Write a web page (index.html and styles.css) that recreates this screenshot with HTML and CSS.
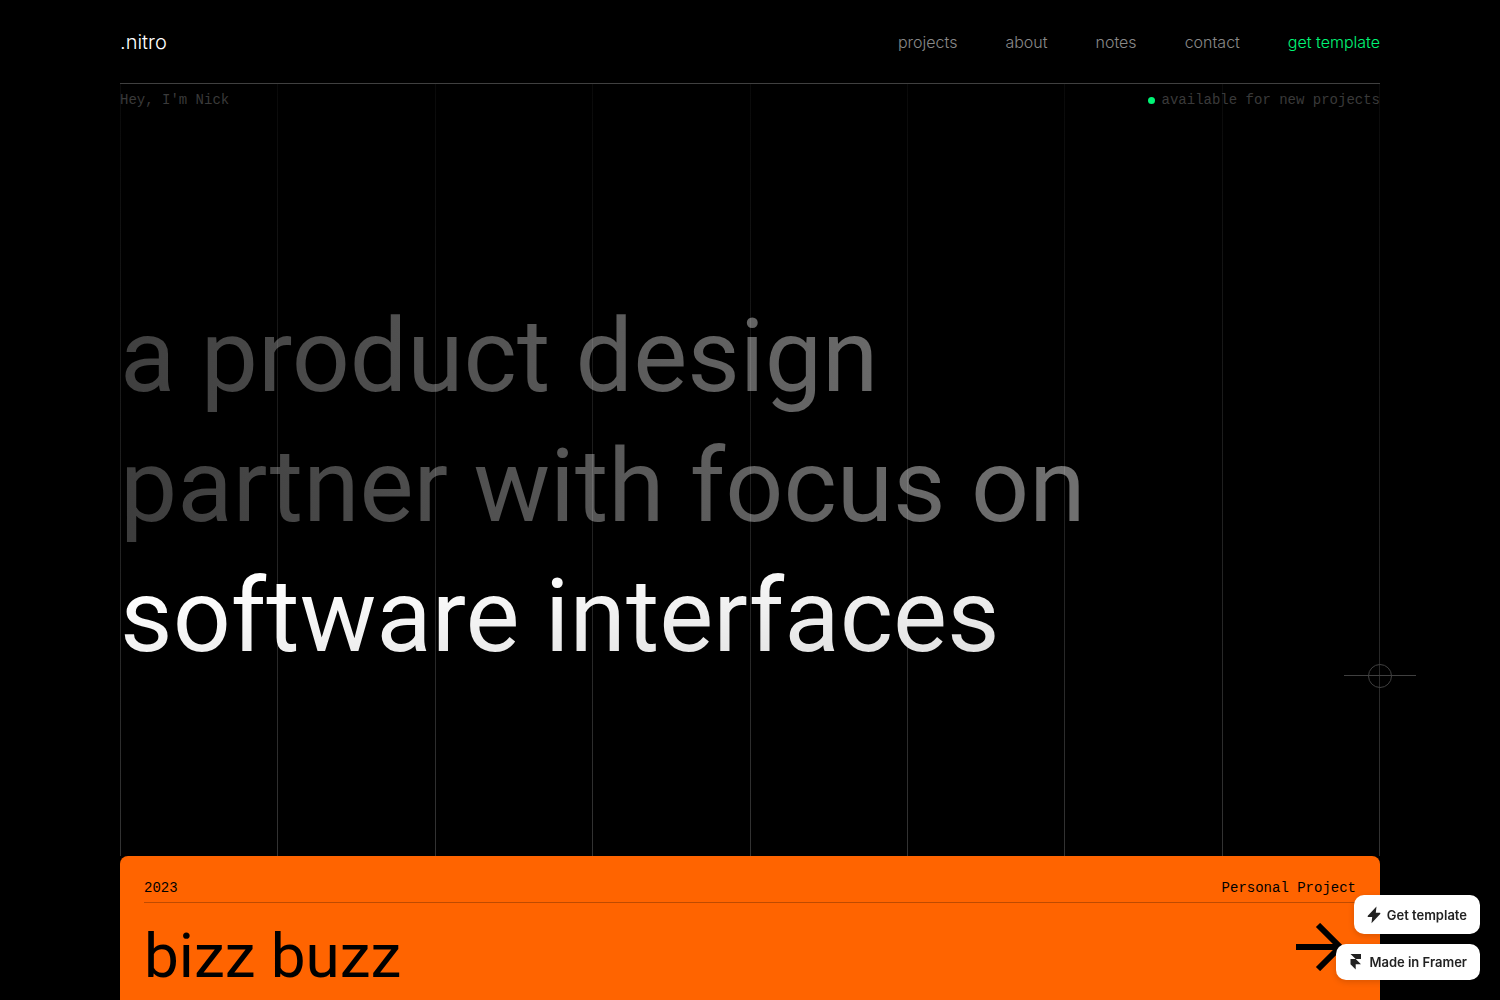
FILE: index.html
```html
<!DOCTYPE html>
<html lang="en">
<head>
<meta charset="utf-8">
<meta name="viewport" content="width=device-width, initial-scale=1">
<title>.nitro</title>
<link rel="stylesheet" href="styles.css">
</head>
<body>
<div class="page">
  <header class="header">
    <a class="logo" href="#">.nitro</a>
    <nav class="nav">
      <a href="#projects">projects</a>
      <a href="#about">about</a>
      <a href="#notes">notes</a>
      <a href="#contact">contact</a>
      <a class="accent" href="#template">get template</a>
    </nav>
  </header>
  <main class="main">
    <section class="hero">
      <div class="intro">
        <span>Hey, I'm Nick</span>
        <span class="status"><i class="dot"></i>available for new projects</span>
      </div>
      <h1 class="title">
        <span class="muted">a product design<br>partner with focus on</span>
        <span class="bright">software interfaces</span>
      </h1>
      <div class="grid-lines" aria-hidden="true"><i></i><i></i><i></i><i></i><i></i><i></i><i></i><i></i><i></i></div>
      <div class="marker" aria-hidden="true"></div>
    </section>
    <article class="card" id="projects">
      <div class="card-meta"><span>2023</span><span>Personal Project</span></div>
      <div class="card-head">
        <h2>bizz buzz</h2>
        <svg class="arrow" viewBox="0 0 60 48" width="60" height="48" aria-hidden="true"><path d="M0 24H44M22 2L44 24L22 46" fill="none" stroke="#000" stroke-width="6"/></svg>
      </div>
    </article>
  </main>
</div>
<div class="badges">
  <a class="badge badge-tall" href="#template">
    <svg viewBox="0 0 14 18" width="14" height="18" aria-hidden="true"><path d="M9.500.500L.8 9.800Q.2 11 1.200 11H5.200L4.500 17.200L13.200 8Q13.800 6.800 12.800 6.800H8.800Z" fill="#222"/></svg>
    Get template
  </a>
  <a class="badge" href="#framer">
    <svg viewBox="0 0 14 18" width="14" height="18" aria-hidden="true"><path d="M1.500 1H12V6H6.700ZM1.500 6H6.700L12 11.300H6.700V16.500L1.500 11.300Z" fill="#222"/></svg>
    Made in Framer
  </a>
</div>
</body>
</html>
```
FILE: styles.css
```css
* { box-sizing: border-box; }
body {
  margin: 0;
  background: #000;
  color: #fff;
  font-family: Inter, "Liberation Sans", sans-serif;
}
a { color: inherit; text-decoration: none; }
h1, h2 {
  margin: 0;
  font-family: Roboto, Inter, sans-serif;
  font-weight: 400;
}

.page {
  display: flex;
  flex-direction: column;
  min-height: 100vh;
  padding: 0 8%;
}
.header {
  display: flex;
  align-items: center;
  justify-content: space-between;
  height: 84px;
  border-bottom: 1px solid #404040;
}
.logo { font-size: 20px; font-weight: 300; }
.nav {
  display: flex;
  gap: 48px;
  font-size: 16px;
  font-weight: 300;
  color: #888;
}
.nav .accent { color: #00f576; }

.main { display: flex; flex: 1; flex-direction: column; }
.hero {
  position: relative;
  display: flex;
  flex: 1;
  flex-direction: column;
}
.intro {
  display: flex;
  align-items: center;
  justify-content: space-between;
  height: 32px;
  color: #3a3a3a;
  font: 14px "Liberation Mono", monospace;
}
.status { display: flex; align-items: center; gap: 7px; }
.dot {
  width: 7px;
  height: 7px;
  border-radius: 50%;
  background: #00f576;
}
.title {
  display: flex;
  flex: 1;
  flex-direction: column;
  align-items: flex-start;
  justify-content: center;
  font-size: 102px;
  line-height: 130px;
}
.title span {
  -webkit-background-clip: text;
  background-clip: text;
  color: transparent;
}
.title .muted { background-image: linear-gradient(70deg, #3c3c3c, #707070 90%); }
.title .bright { background-image: linear-gradient(175deg, #fff 20%, #e2e2e2 85%); }

/* column guides, fading in towards the bottom of the hero */
.grid-lines {
  position: absolute;
  inset: 0;
  display: flex;
  justify-content: space-between;
  pointer-events: none;
}
.grid-lines i {
  width: 1px;
  background: linear-gradient(rgba(255, 255, 255, 0.04), rgba(255, 255, 255, 0.2));
}
.marker {
  position: absolute;
  right: -12px;
  bottom: 168px;
  width: 24px;
  height: 24px;
  border: 1px solid #404040;
  border-radius: 50%;
}
.marker::before {
  content: "";
  position: absolute;
  top: 10px;
  left: -25px;
  width: 72px;
  height: 1px;
  background: #404040;
}

.card {
  padding: 24px 24px 4px;
  border-radius: 8px 8px 0 0;
  background: #ff6400;
  color: #000;
}
.card-meta {
  display: flex;
  justify-content: space-between;
  padding-bottom: 6px;
  border-bottom: 1px solid #bf4b00;
  font: 14px/16px "Liberation Mono", monospace;
}
.card-head {
  display: flex;
  align-items: center;
  justify-content: space-between;
  padding-top: 13px;
}
.card-head h2 { font-size: 62px; line-height: 80px; }
.arrow { margin-bottom: 18px; }

.badges {
  position: fixed;
  right: 20px;
  bottom: 20px;
  display: flex;
  flex-direction: column;
  align-items: flex-end;
  gap: 10px;
}
.badge {
  display: flex;
  align-items: center;
  gap: 6px;
  height: 36px;
  padding: 0 13px;
  border-radius: 10px;
  background: #fff;
  box-shadow: 0 2px 6px rgba(0, 0, 0, 0.15);
  color: #222;
  font-size: 13px;
  font-weight: 600;
}
.badge-tall { height: 39px; }
```
